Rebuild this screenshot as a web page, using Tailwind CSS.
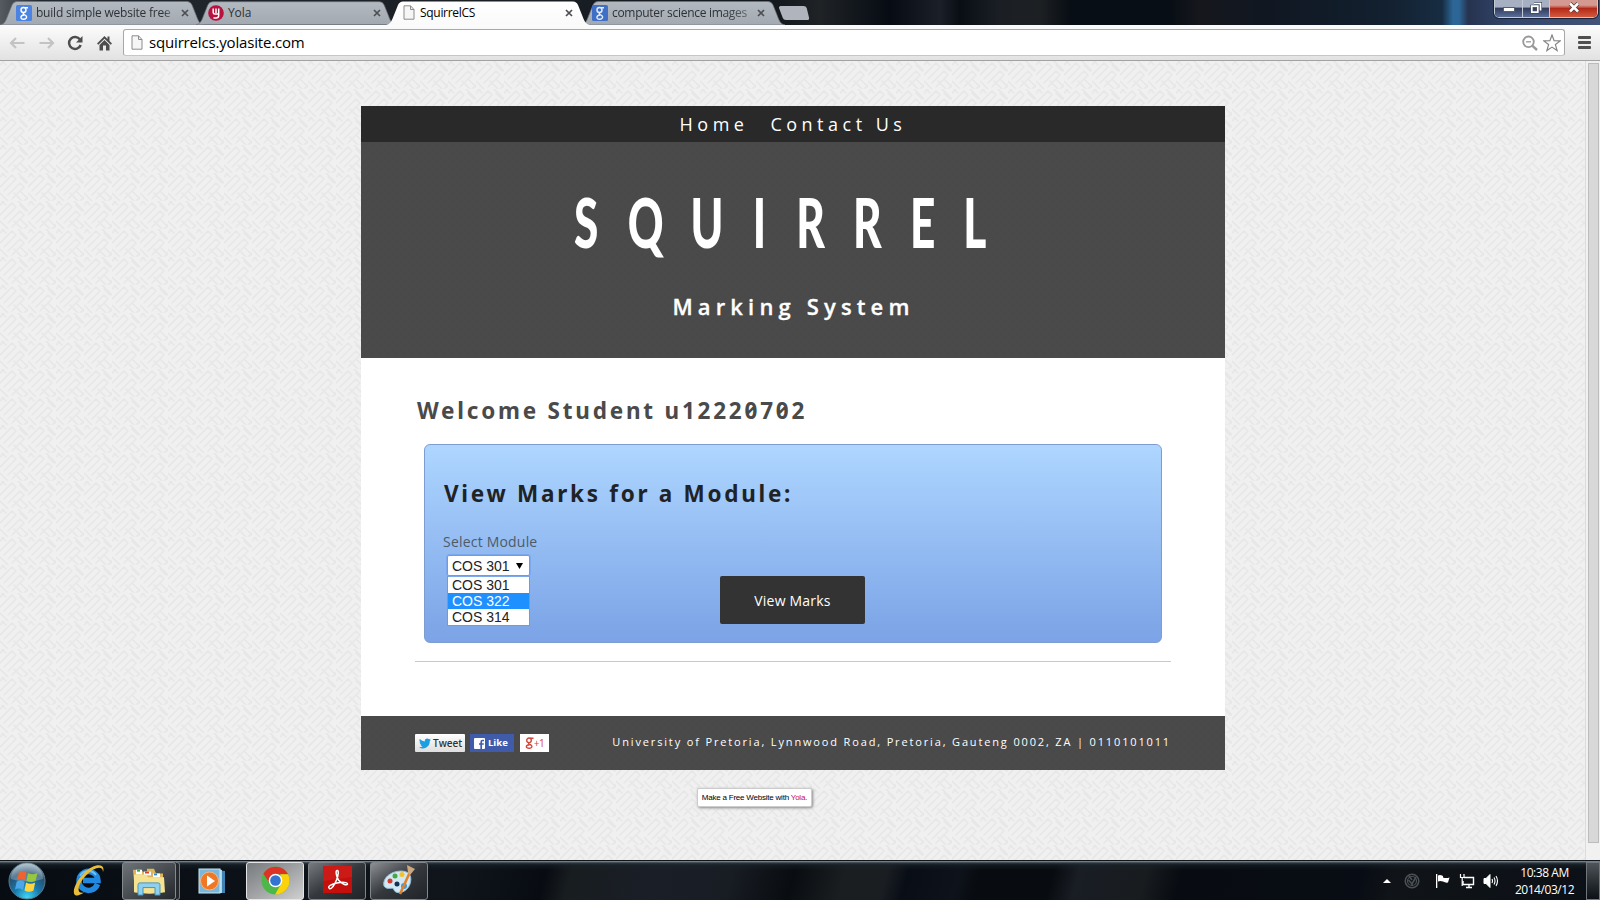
<!DOCTYPE html>
<html lang="en">
<head>
<meta charset="utf-8">
<title>SquirrelCS</title>
<script src="https://cdn.jsdelivr.net/npm/@tailwindcss/browser@4"></script>
</head>
<body class="w-[1600px] h-[900px] overflow-hidden flex flex-col font-['Open_Sans','Noto_Sans',sans-serif] bg-[#efefef]">

<!-- shared shapes -->
<svg class="absolute w-0 h-0">
  <defs>
    <linearGradient id="tabFill" x1="0" y1="0" x2="0" y2="1"><stop offset="0" stop-color="#b3b9c1"/><stop offset="1" stop-color="#a3a9b1"/></linearGradient>
    <linearGradient id="tabActive" x1="0" y1="0" x2="0" y2="1"><stop offset="0" stop-color="#ffffff"/><stop offset="1" stop-color="#fafafa"/></linearGradient>
    <symbol id="tab" viewBox="0 0 204 25"><path d="M0 25C5 24 6 20 8 15L12 5Q13.500 1.500 17 1.500H187Q190.500 1.500 192 5L196 15C198 20 199 24 204 25Z"/></symbol>
    <symbol id="page" viewBox="0 0 12 15"><path d="M1 .8H7.500L11 4.500V14.200H1Z" fill="#f6f6f6" stroke="#8c8c8c"/><path d="M7.500 .8V4.500H11" fill="none" stroke="#8c8c8c"/></symbol>
    <symbol id="close" viewBox="0 0 8 8"><path d="M1 1L7 7M7 1L1 7" stroke="#4c4f53" stroke-width="1.700"/></symbol>
    <pattern id="weave" width="28" height="28" patternUnits="userSpaceOnUse">
      <g fill="none" stroke="#e7e7e7" stroke-width="1.600" stroke-linecap="round" stroke-linejoin="round">
        <path d="M-2 16L12 2L16 6L4 18M8 22L20 10L24 14L12 26M-2 6L4 0M24 28L30 22"/>
        <path d="M16 -2L30 12M14 20L22 28M20 18L28 26M0 -2L6 4M0 20L8 28M20 4L26 10"/>
      </g>
    </pattern>
    <pattern id="weaveDark" width="8" height="8" patternUnits="userSpaceOnUse"><path d="M0 8L8 0M0 0L4 4" stroke="#484848" stroke-width="1"/></pattern>
  </defs>
</svg>

<!-- tab strip -->
<header class="relative h-[25px] shrink-0 flex justify-between bg-[linear-gradient(90deg,#555b60_0,#22282e_40px,#14191e_780px,#1f2326_820px,#070c14_890px,#1b1f27_940px,#090e15_960px,#1b1f25_1000px,#1d2023_1040px,#080e15_1070px,#080e15_1170px,#16171d_1200px,#101722_1270px,#13202f_1385px,#172c42_1442px,#2c6696_1453px,#2c6696_1459px,#26334f_1468px,#33466b_1510px,#42527a_1600px)]">
  <div class="flex">
    <div class="relative w-[192px] h-[25px] flex items-center pl-4 pr-[3px]">
      <svg class="absolute left-0 top-0 w-[204px] h-[25px]" fill="url(#tabFill)" stroke="#6d7379" stroke-width=".7"><use href="#tab"/></svg>
      <svg class="relative w-4 h-4 shrink-0" viewBox="0 0 16 16"><rect width="16" height="16" rx="1.500" fill="#4b83e2"/><g fill="none" stroke="#fff" stroke-width="1.400"><circle cx="7.500" cy="5" r="2.500"/><path d="M9 2.700H12M8.500 7.400Q6 9 8.500 9.800C12.500 11.500 10 14.500 7.500 14.300C4 14.200 4 10.500 8 10"/></g></svg>
      <div class="relative ml-1 w-[138px] whitespace-nowrap text-[12px] tracking-[-0.22px] leading-4 text-[#2e3135] [mask-image:linear-gradient(90deg,#000_128px,transparent_140px)]">build simple website free (</div>
      <svg class="relative w-2 h-2 ml-[7px] shrink-0"><use href="#close"/></svg>
    </div>
    <div class="relative w-[192px] h-[25px] flex items-center pl-4">
      <svg class="absolute left-[4px] top-0 w-[200px] h-[25px]" preserveAspectRatio="none" fill="url(#tabFill)" stroke="#6d7379" stroke-width=".7"><use href="#tab"/></svg>
      <svg class="relative w-4 h-4 shrink-0" viewBox="0 0 16 16"><circle cx="8" cy="8" r="7.800" fill="#b8123f"/><path d="M5.200 3.500V7.500Q5.200 9 7 9H10.500M10.700 3.500V10.500Q10.700 13 8 13H5.500M8 3.500V8" fill="none" stroke="#fff" stroke-width="1.500"/></svg>
      <div class="relative ml-1 w-[138px] text-[12px] tracking-[-0.1px] leading-4 text-[#2e3135]">Yola</div>
      <svg class="relative w-2 h-2 ml-[7px] shrink-0"><use href="#close"/></svg>
    </div>
    <div class="relative z-10 w-[192px] h-[25px] flex items-center pl-[19px]">
      <svg class="absolute left-[2px] top-0 w-[204px] h-[25px]" fill="url(#tabActive)"><use href="#tab"/></svg>
      <svg class="relative w-3 h-[15px] shrink-0"><use href="#page"/></svg>
      <div class="relative ml-[5px] w-[138px] text-[12px] tracking-[-0.3px] leading-4 text-black">SquirrelCS</div>
      <svg class="relative w-2 h-2 ml-[7px] shrink-0"><use href="#close"/></svg>
    </div>
    <div class="relative w-[203px] h-[25px] flex items-center pl-4">
      <svg class="absolute left-[5px] top-0 w-[204px] h-[25px]" fill="url(#tabFill)" stroke="#6d7379" stroke-width=".7"><use href="#tab"/></svg>
      <svg class="relative w-4 h-4 shrink-0" viewBox="0 0 16 16"><rect width="16" height="16" rx="1.500" fill="#3f70c6"/><g fill="none" stroke="#e6ecf7" stroke-width="1.400"><circle cx="7.500" cy="5" r="2.500"/><path d="M9 2.700H12M8.500 7.400Q6 9 8.500 9.800C12.500 11.500 10 14.500 7.500 14.300C4 14.200 4 10.500 8 10"/></g></svg>
      <div class="relative ml-1 w-[138px] whitespace-nowrap text-[12px] tracking-[-0.3px] leading-4 text-[#2e3135] [mask-image:linear-gradient(90deg,#000_110px,#0008_137px)]">computer science images</div>
      <svg class="relative w-2 h-2 ml-[7px] shrink-0"><use href="#close"/></svg>
    </div>
    <svg class="w-8 h-[25px]" viewBox="0 0 32 25"><path d="M2 6H24.500Q27 6 27.700 8L30 17.500Q30.500 20 28.500 20H7Q4.500 20 3.800 18L0 8Q-.3 6 2 6Z" fill="#b0b5bd"/></svg>
  </div>
  <div class="flex h-[18px] mr-[2px] w-[104px] rounded-b-[5px] border border-t-0 border-[#c3cad6] overflow-hidden outline outline-[#1a2337]">
    <div class="w-[28px] flex items-end justify-center pb-[5px] border-r border-[#c3cad6] bg-linear-to-b from-[#a7b0c3] from-40% via-[#323d5e] via-50% to-[#5a6d98]"><div class="w-[12px] h-[5px] bg-white border border-[#555e70]"></div></div>
    <div class="w-[27px] flex items-center justify-center pb-0.5 border-r border-[#c3cad6] bg-linear-to-b from-[#a7b0c3] from-40% via-[#323d5e] via-50% to-[#5a6d98]"><svg class="w-3 h-3" viewBox="0 0 12 12" fill="none"><path d="M4 1.500H10.500V8.500M1.800 4.200H7.800V10.200H1.800Z" stroke="#414a5c" stroke-width="3"/><path d="M4 1.500H10.500V8.500M1.800 4.200H7.800V10.200H1.800Z" stroke="#fff" stroke-width="1.700"/></svg></div>
    <div class="flex-1 flex items-center justify-center pb-0.5 bg-linear-to-b from-[#d49a91] from-30% via-[#b42818] via-50% to-[#d2593c]"><svg class="w-3 h-[11px]" viewBox="0 0 12 11"><path d="M2 1.500L10 9.500M10 1.500L2 9.500" stroke="#5a3b3b" stroke-width="4"/><path d="M2 1.500L10 9.500M10 1.500L2 9.500" stroke="#fff" stroke-width="2.500"/></svg></div>
  </div>
</header>

<!-- toolbar -->
<div class="h-9 shrink-0 flex items-center bg-linear-to-b from-[#fcfcfc] to-[#e2e2e2] border-b border-[#a2a2a2] pl-[9px]">
  <svg class="w-4 h-3" viewBox="0 0 16 12" fill="none" stroke="#c3c3c3" stroke-width="2.200"><path d="M15.500 6H2M7 1L2 6L7 11"/></svg>
  <svg class="w-4 h-3 ml-[14px]" viewBox="0 0 16 12" fill="none" stroke="#c3c3c3" stroke-width="2.200"><path d="M.5 6H14M9 1L14 6L9 11"/></svg>
  <svg class="w-4 h-4 ml-3" viewBox="0 0 16 16"><path d="M13 4.500A6 6 0 1 0 13.700 10" fill="none" stroke="#4d4d4d" stroke-width="2.500"/><path d="M15.500 1V7.500H9Z" fill="#4d4d4d"/></svg>
  <svg class="w-[15px] h-4 ml-[14px]" viewBox="0 0 15 16" fill="#4d4d4d"><path d="M7.500 1L0 8.500L1.300 9.800L7.500 3.700L13.700 9.800L15 8.500L12.500 6V1.500H10.500V4Z"/><path d="M2.500 10L7.500 5L12.500 10V15.500H9V10.500H6V15.500H2.500Z"/></svg>
  <div class="ml-[11px] w-[1442px] h-[27px] bg-white border border-[#a8a8a8] border-b-[#c6c6c6] rounded-[3px] flex items-center pl-[7px] pr-[3px]">
    <svg class="w-3 h-[15px]"><use href="#page"/></svg>
    <span class="ml-[6px] text-[15px] tracking-[-0.170px] leading-5 pb-[2px] text-black">squirrelcs.yolasite.com</span>
    <svg class="ml-auto w-4 h-4" viewBox="0 0 16 16" fill="none" stroke="#999"><circle cx="6.500" cy="6.800" r="5.300" stroke-width="1.800"/><path d="M4 6.800H9" stroke-width="1.300"/><path d="M10.500 10.800L15 15" stroke-width="2.400"/></svg>
    <svg class="ml-[5px] w-[18px] h-[18px]" viewBox="0 0 18 18"><path d="M9 1L11.100 6.700L17.200 6.900L12.400 10.600L14.100 16.500L9 13.100L3.900 16.500L5.600 10.600L.8 6.900L6.900 6.700Z" fill="#fff" stroke="#848484" stroke-width="1.200"/></svg>
  </div>
  <div class="ml-[13px] w-[13px] flex flex-col gap-[2px]"><i class="h-[3px] bg-[#4f4f4f] rounded-[1px]"></i><i class="h-[3px] bg-[#4f4f4f] rounded-[1px]"></i><i class="h-[3px] bg-[#4f4f4f] rounded-[1px]"></i></div>
</div>

<!-- page viewport -->
<div class="h-[799px] shrink-0 flex">
  <div class="relative w-[1585px] h-full overflow-hidden">
    <svg class="absolute inset-0 w-full h-full"><rect width="100%" height="100%" fill="#f0f0f0"/><rect width="100%" height="100%" fill="url(#weave)"/></svg>
    <main class="relative ml-[361px] w-[864px] pt-[45px]">
      <nav class="h-9 flex justify-center gap-[22px] bg-[#292929] text-white text-[18px] leading-[36px] tracking-[4.5px]"><a>Home</a><a>Contact Us</a></nav>
      <section class="relative h-[216px] bg-[#4a4a4a]">
        <svg class="absolute inset-0 w-full h-full"><rect width="100%" height="100%" fill="url(#weaveDark)"/></svg>
        <svg class="relative block w-full h-[140px]" viewBox="361 142 864 140"><text transform="scale(.64 1)" x="897 981 1079 1176 1244 1333 1422 1505" y="248.500" fill="#fff" font-family="Lato" font-weight="900" font-size="69">SQUIRREL</text></svg>
        <h2 class="relative text-center text-white font-semibold text-[22px] leading-[30px] tracking-[5.150px] pt-[9px] pl-[1px] whitespace-nowrap [-webkit-text-stroke:0.3px_white]">Marking System</h2>
      </section>
      <section class="h-[358px] bg-white pl-[54px] pr-[54px] pt-[37px]">
        <h1 class="font-['Noto_Sans',sans-serif] slashed-zero font-bold text-[22.500px] leading-8 tracking-[2.780px] text-[#4a4a4a] pl-[2px] whitespace-nowrap">Welcome Student u12220702</h1>
        <div class="mt-[17px] ml-[9px] w-[738px] h-[199px] rounded-[6px] border border-[#7d9dd2] bg-linear-to-b from-[#aed6ff] to-[#7ba3e6] pl-[18px] pt-[33px]">
          <h2 class="font-['Noto_Sans',sans-serif] font-bold text-[22.500px] leading-8 tracking-[2.720px] text-[#1f2326] pl-[1px] whitespace-nowrap">View Marks for a Module:</h2>
          <div class="flex">
            <div class="w-[277px] pt-[22px]">
              <div class="text-[14px] leading-[20px] text-[#4e5a68] tracking-[0.2px]">Select Module</div>
              <div class="mt-[3px] ml-[4px] w-[83px] h-[21px] rounded-[2px] border border-[#6d9be8] outline outline-[#7ea8ee] bg-white flex items-center justify-between pl-[4px] pr-[6px] pt-[1px] font-['Liberation_Sans',sans-serif] text-[14px] text-[#222]">COS 301<svg class="w-[7px] h-[6px]" viewBox="0 0 7 6"><path d="M0 0H7L3.500 6Z"/></svg></div>
              <div class="ml-[4px] w-[83px] h-[50px] border border-[#7a9cb4] bg-white font-['Liberation_Sans',sans-serif] text-[14px] leading-4 text-[#222]">
                <div class="pl-1 h-4">COS 301</div><div class="pl-1 h-4 bg-[#1e90ff] text-white">COS 322</div><div class="pl-1 h-4">COS 314</div>
              </div>
            </div>
            <div class="mt-[66px] w-[145px] h-12 rounded-[2px] bg-[#333] text-white text-[14px] leading-[49px] tracking-[0.2px] text-center">View Marks</div>
          </div>
        </div>
        <div class="mt-[18px] h-[1px] bg-[#c8c8c8]"></div>
      </section>
      <footer class="relative h-[54px] bg-[#4a4a4a]">
        <svg class="absolute inset-0 w-full h-full"><rect width="100%" height="100%" fill="url(#weaveDark)"/></svg>
        <div class="relative flex items-start px-[54px] pt-[18px]">
          <div class="w-[50px] h-[18px] rounded-[1px] bg-linear-to-b from-white to-[#dedede] flex items-center pl-1 text-[10px] font-semibold text-[#333]"><svg class="w-3 h-[11px] mr-[2px] shrink-0" viewBox="0 0 24 20"><path fill="#1b9fe0" d="M24 2.400a10 10 0 0 1-2.800.8A5 5 0 0 0 23.300.5a10 10 0 0 1-3.100 1.200 4.900 4.900 0 0 0-8.400 4.500A14 14 0 0 1 1.700 1a4.900 4.900 0 0 0 1.500 6.600 5 5 0 0 1-2.200-.6 4.900 4.900 0 0 0 3.900 4.900 5 5 0 0 1-2.200.1 4.900 4.900 0 0 0 4.600 3.400A10 10 0 0 1 0 17.500 14 14 0 0 0 21.500 5Z"/></svg>Tweet</div>
          <div class="ml-[5px] w-[44px] h-[18px] bg-[#3f5ba9] flex items-center pl-1 text-[9.500px] font-bold text-white"><svg class="w-[11px] h-[11px] mr-[3px]" viewBox="0 0 11 11"><rect width="11" height="11" rx="1" fill="#fff"/><path d="M10 2.500H8.500Q7.200 2.500 7.200 4V11M5 6H9.800" stroke="#3f5ba9" stroke-width="1.700" fill="none"/></svg>Like</div>
          <div class="ml-[6px] w-[29px] h-[18px] bg-white flex items-center justify-center text-[#d2473a] text-[10px] tracking-[-0.5px]"><svg class="w-[9px] h-3" viewBox="0 0 9 12" fill="none" stroke="#d2473a" stroke-width="1.400"><circle cx="4" cy="3.300" r="2.300"/><path d="M5 1.300H8.500M4.500 5.500Q2.500 6.800 5 7.500C8.500 9 6.500 11.400 4 11.300C.5 11.200 .3 8 4.500 7.700"/></svg>+1</div>
          <div class="ml-auto text-white text-[11px] leading-4 tracking-[1.850px] whitespace-nowrap">University of Pretoria, Lynnwood Road, Pretoria, Gauteng 0002, ZA | 0110101011</div>
        </div>
      </footer>
      <div class="mt-[18px] ml-[336px] w-[115px] h-[19px] rounded-[2px] bg-white border border-[#ccc] shadow-[1px_1px_3px_#888] font-['Liberation_Sans',sans-serif] text-[8px] leading-[18px] tracking-[-0.220px] text-center text-black whitespace-nowrap">Make a Free Website with <span class="text-[#c8104c]">Yola.</span></div>
    </main>
  </div>
  <div class="w-[15px] bg-[#f1f1f1] border-l border-[#dcdcdc] pl-[2px] pt-[2px]"><div class="w-[11px] h-[780px] bg-[#d8d8d8] border border-[#bcbcbc]"></div></div>
</div>

<!-- taskbar -->
<footer class="h-10 shrink-0 border-t border-[#10161b] bg-[linear-gradient(180deg,#8a959c_0,#2b363e_2px,#1b252c80_4px,transparent_9px),linear-gradient(105deg,#070c12_0,#10151c_440px,#080c12_530px,#181d20_555px,#1a1e27_640px,#181c23_710px,#090d11_770px,#1a1e21_820px,#1a1e22_860px,#090d16_880px,#0e121a_930px,#080c10_950px,#080c10_1020px,#191d24_1045px,#181c1f_1110px,#080c12_1145px,#080c14_1320px,#101418_1350px,#0a0f16_1600px)] flex items-center">
  <svg class="ml-[8px] w-[38px] h-[38px]" viewBox="0 0 38 38">
    <defs><radialGradient id="orb" cx=".5" cy=".95" r=".9"><stop offset="0" stop-color="#3fd6f7"/><stop offset=".4" stop-color="#1879ae"/><stop offset=".75" stop-color="#26506f"/><stop offset="1" stop-color="#8fa9b9"/></radialGradient></defs>
    <circle cx="19" cy="19" r="18" fill="url(#orb)" stroke="#5c7b8d"/><path d="M3 17A16 16 0 0 1 35 17Q19 22 3 17Z" fill="#fff" opacity=".25"/>
    <path d="M11 10Q15 8 18.500 10.500L17 18.500Q13 16 9 18Z" fill="#ee6430"/><path d="M20 11Q24 13.500 29.500 11L27.500 19Q23 21 18.500 19Z" fill="#98c73c"/><path d="M8.700 19.500Q13 17.500 16.700 20L15 28Q11 25.500 7 27.500Z" fill="#4aa7e8"/><path d="M18 20.500Q22.500 23 27.200 20.500L25.500 28.500Q21 31 16.500 28.500Z" fill="#ffd43e"/>
  </svg>
  <svg class="ml-[26px] -mt-[2px] w-[34px] h-[34px]" viewBox="0 0 34 34"><path d="M25.500 21A9.500 9.500 0 1 1 26 17.500H11" fill="none" stroke="#2388df" stroke-width="5.500"/><path d="M8 13A9.500 9.500 0 0 1 24 12" fill="none" stroke="#6cc2f6" stroke-width="2"/><path d="M31 9C34 0 22 0 12 10C3 19 -1 31 4 32.500C7 33 12 29.500 12 29.500C4 31.500 5 22 14 12.500C22 4 31 2 31 9Z" fill="#e9bd3a"/></svg>
  <div class="ml-[16px] w-[54px] h-[38px] rounded-[3px] border border-[#848a90] bg-linear-to-br from-[#6f7478] to-[#24282d] flex items-center justify-center">
    <svg class="w-[34px] h-[30px] -ml-px" viewBox="0 0 34 32" preserveAspectRatio="none"><path d="M1 4H9L11 6H15V3H22L24 8H31V28H3Z" fill="#dcb65a"/><path d="M4 4h6v5H4z" fill="#fff"/><path d="M5 4h3v2H5z" fill="#35a537"/><path d="M12 6h7v4h-7z" fill="#fff"/><path d="M13 6h4v2h-4z" fill="#d44425"/><path d="M21 8h7v4h-7z" fill="#fff"/><path d="M22 8h3v2h-3z" fill="#3189cf"/><path d="M2 9H14L16 12H32L33 28Q18 31 2 28Z" fill="#f6e392"/><path d="M6 31V20Q6 18 8 18H26Q28 18 28 20V31H23V23H11V31Z" fill="#8fd0ef" stroke="#4792b9"/></svg>
  </div>
  <div class="w-[4px] h-[38px] rounded-r-[3px] border border-l-0 border-[#71777d] bg-[#25292e]"></div>
  <svg class="ml-[18px] w-7 h-7" viewBox="0 0 28 28"><path d="M10 2L27 4V26H10Z" fill="#3e83b1"/><path d="M20 2L24 3V26H20Z" fill="#a7d8f1"/><rect x="1" y="2" width="21" height="24" fill="#79b8db" stroke="#c8e7f5"/><circle cx="11.500" cy="14" r="9" fill="#ef7826" stroke="#f7b585"/><path d="M9 8.500L17 14L9 19.500Z" fill="#fff"/></svg>
  <div class="ml-[20px] w-[58px] h-[38px] rounded-[3px] border border-[#e5e5e5] bg-linear-to-br from-[#777b7e] via-[#a0a2a4] to-[#d0d0d0] flex items-center justify-center">
    <svg class="w-[29px] h-[29px]" viewBox="0 0 30 30"><circle cx="15" cy="15" r="14.500" fill="#4db749"/><path d="M2.500 8A14.500 14.500 0 0 1 28 8.500H15L9 18Z" fill="#df3227"/><path d="M28 8.500A14.500 14.500 0 0 1 14.500 29.500L21 18L20 8.500Z" fill="#fcd20b"/><circle cx="15" cy="15" r="7" fill="#fff"/><circle cx="15" cy="15" r="5.500" fill="#3274d0"/></svg>
  </div>
  <div class="ml-[4px] w-[58px] h-[38px] rounded-[3px] border border-[#81868b] bg-linear-to-br from-[#777b80] via-[#34383d] to-[#202429] flex items-start pt-[3px] justify-center">
    <svg class="w-[29px] h-[27px]" viewBox="0 0 29 27"><path d="M0 0H29V27H0Z" fill="#c3100c"/><path d="M0 0H29V11L0 15Z" fill="#cc1b16"/><path d="M6.500 22.500C3.500 20.500 9 18 14 17C19 16 24.500 16 24.500 18C24 20 18.500 18 15.500 14C13 10 12.500 5 14 4.500C16 4 15.500 9 13.500 14C11.500 19 8.500 23.500 6.500 22.500Z" fill="none" stroke="#fff" stroke-width="1.500"/></svg>
  </div>
  <div class="ml-[4px] w-[58px] h-[38px] rounded-[3px] border border-[#81868b] bg-linear-to-br from-[#8d9195] via-[#34383d] to-[#202429] flex items-center justify-center">
    <svg class="w-[34px] h-[32px] -mt-[2px]" viewBox="0 0 34 32"><path d="M2 22C0 14 9 7 19 7C29 7 30 14 28 20C25 29 14 31 12 26C11 22 5 27 2 22Z" fill="#d2e8f5" stroke="#94bcd4"/><circle cx="8" cy="17" r="2.500" fill="#d23c30"/><circle cx="13" cy="12" r="2.500" fill="#46aa3e"/><circle cx="20" cy="10.500" r="2.500" fill="#f2c22a"/><circle cx="15" cy="20" r="2.500" fill="#153250"/><circle cx="22" cy="22" r="3" fill="#3a9be0"/><path d="M28 8L18 30" stroke="#e0812c" stroke-width="2.600"/><path d="M25 1L33 5L28 11L26 9Z" fill="#cda87d"/></svg>
  </div>
  <div class="ml-auto flex items-center h-full">
    <svg class="w-2 h-1" viewBox="0 0 8 4"><path d="M0 4L4 0L8 4Z" fill="#fff"/></svg>
    <svg class="ml-[13px] w-4 h-4" viewBox="0 0 16 16" fill="none" stroke="#4b5054"><circle cx="8" cy="8" r="6.800" stroke-width="1.500"/><circle cx="8" cy="8" r="4.500" stroke-width="1.200"/><path d="M4.500 7L8 11L12 4M8 11V13M5 3L8 7" stroke-width="1.600"/></svg>
    <svg class="ml-[15px] w-[15px] h-4" viewBox="0 0 15 16" fill="#fff"><path d="M1 1H2.300V15H1ZM3 2.500Q5 1.500 8 3V4.500Q11 5.500 14.500 4.500L13 9.500Q10.500 10 8 8.500Q5 7.500 3 8.500Z"/></svg>
    <svg class="ml-[9px] w-4 h-4" viewBox="0 0 16 16" fill="none" stroke="#fff"><path d="M5 4.500H14.500V11.500H4V8M7 14.500H13M10 12V14" stroke-width="1.400"/><path d="M1.500 1V4.500H5V1M3.200 4.500V13" stroke-width="1.200"/></svg>
    <svg class="ml-[8px] w-4 h-4" viewBox="0 0 16 16" fill="none" stroke="#fff"><path d="M1 5.500H3L7 1.500V14.500L3 10.500H1Z" fill="#fff"/><path d="M9 6Q10 8 9 10M11 4.500Q13 8 11 11.500M13 3Q16 8 13 13" stroke-width="1.100"/></svg>
    <div class="w-[87px] pl-[4px] text-center text-white text-[12px] leading-[17px] tracking-[-0.450px]">10:38 AM<br>2014/03/12</div>
    <div class="w-[14px] h-[38px] border border-[#70767b] bg-linear-to-b from-[#4e5459] to-[#0d1116]"></div>
  </div>
</footer>
</body>
</html>
